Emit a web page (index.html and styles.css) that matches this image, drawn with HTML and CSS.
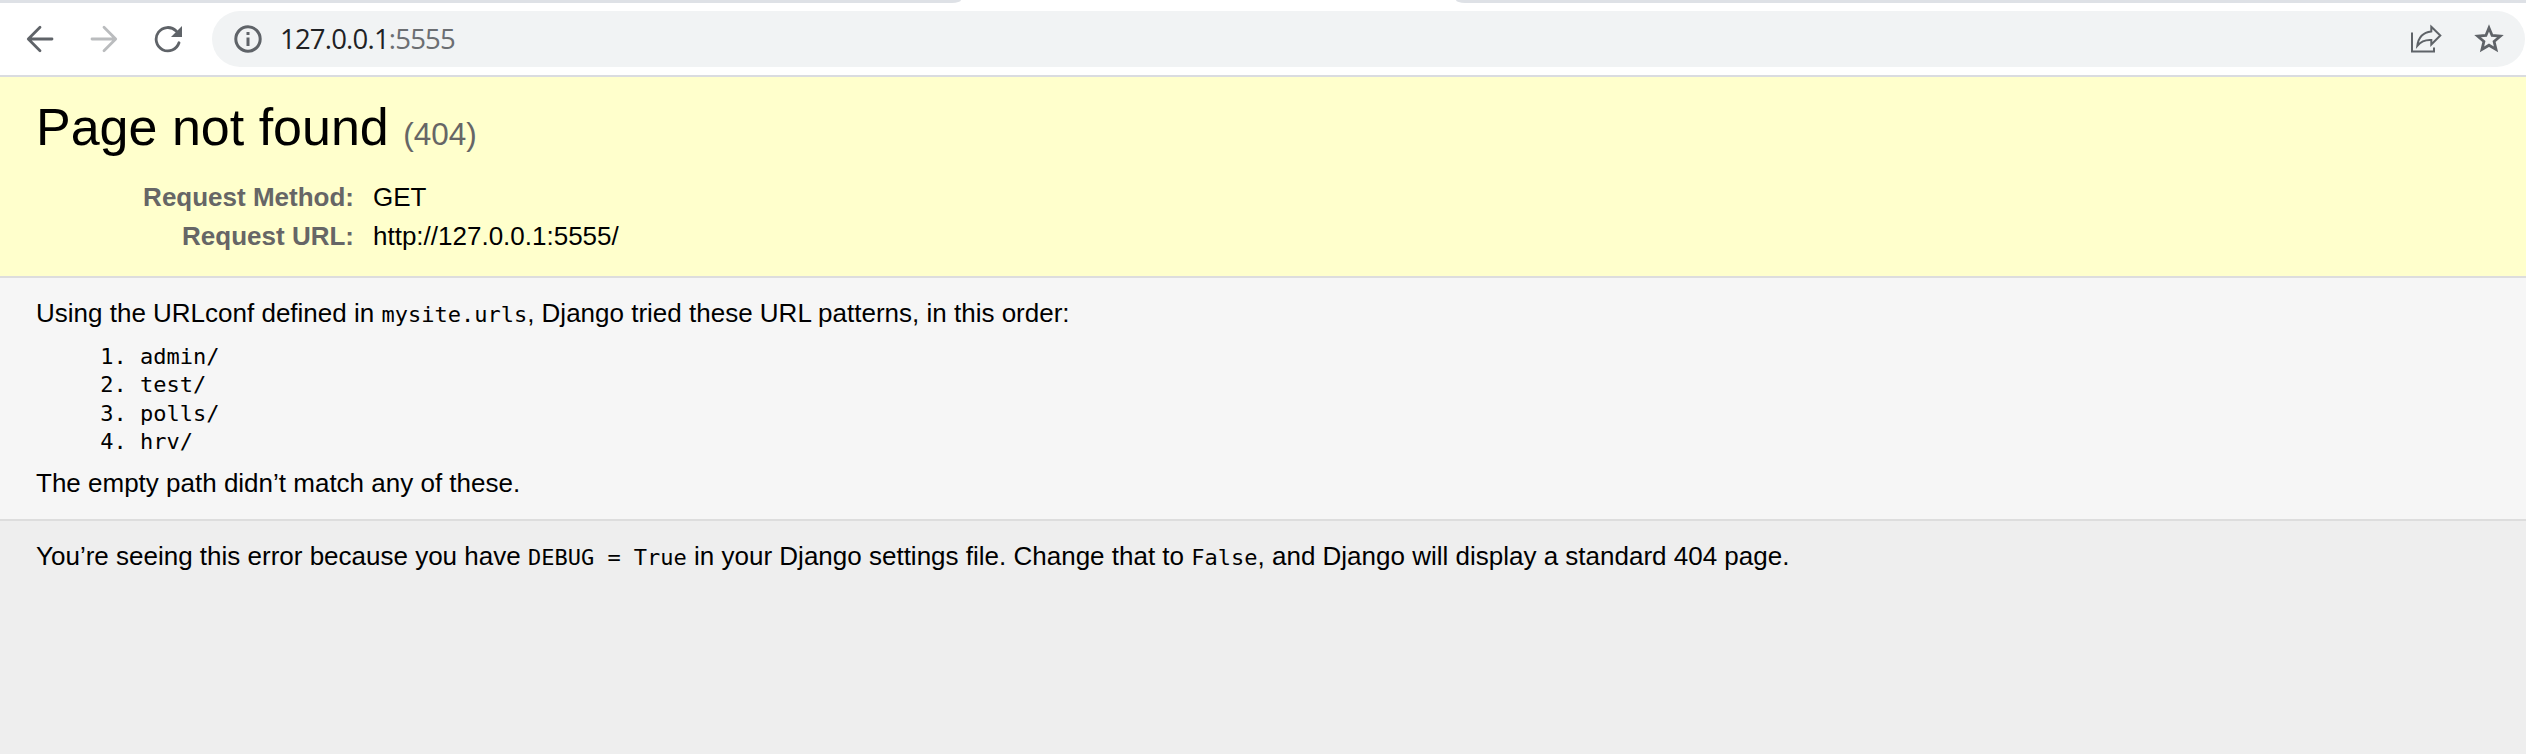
FILE: index.html
```html
<!DOCTYPE html>
<html lang="en">
<head>
<meta charset="utf-8">
<title>Page not found at /</title>
<link rel="stylesheet" href="styles.css">
</head>
<body>
<div class="browser">
  <div class="tabstrip"><div class="tabs-left"></div><div class="tabs-right"></div></div>
  <div class="toolbar">
    <svg class="nav back" viewBox="0 0 28 28"><path d="M26 14H3M14 2.3 2.3 14 14 25.7"/></svg>
    <svg class="nav forward" viewBox="0 0 28 28"><path d="M2 14H25M14 2.3 25.7 14 14 25.7"/></svg>
    <svg class="nav reload" viewBox="0 0 28 28"><path d="M25 17.8A11.7 11.7 0 1 1 22.2 6"/><path class="solid" d="M28 1V12H17Z"/></svg>
    <div class="omnibox">
      <svg class="info-icon" viewBox="0 0 28 28"><circle cx="14" cy="14" r="12.2"/><path d="M14 12.5V21M14 7V10"/></svg>
      <div class="address">127.0.0.1<span>:5555</span></div>
      <svg class="share" viewBox="0 0 32 30"><path d="M2 8.5V27.5H24V23.5"/><path class="arrow" d="M21.3 2.8 30.3 11.5 21.3 20.5V16C15.5 15.6 11 17.4 7.3 21.8C8.3 13.5 13 8.4 21.3 7.4Z"/></svg>
      <svg class="star" viewBox="0 0 30 30"><path d="M15 4 18.1 11.5 26.3 12.2 20.1 17.5 22 25.4 15 21.2 8 25.4 9.9 17.5 3.7 12.2 11.9 11.5Z"/></svg>
    </div>
  </div>
</div>
<header class="summary">
  <h1>Page not found <small>(404)</small></h1>
  <dl class="meta">
    <dt>Request Method:</dt><dd>GET</dd>
    <dt>Request URL:</dt><dd>http://127.0.0.1:5555/</dd>
  </dl>
</header>
<main class="info">
  <p>Using the URLconf defined in <code>mysite.urls</code>, Django tried these URL patterns, in this order:</p>
  <ol class="patterns">
    <li>admin/</li>
    <li>test/</li>
    <li>polls/</li>
    <li>hrv/</li>
  </ol>
  <p>The empty path didn’t match any of these.</p>
</main>
<footer class="explanation">
  <p>You’re seeing this error because you have <code>DEBUG = True</code> in your Django settings file. Change that to <code>False</code>, and Django will display a standard 404 page.</p>
</footer>
</body>
</html>
```
FILE: styles.css
```css
* { box-sizing: border-box; margin: 0; padding: 0; }
body {
  min-height: 754px;
  overflow: hidden;
  background: #eee;
  color: #000;
  font-family: "Liberation Sans", Arial, sans-serif;
  font-size: 26px;
}
.browser { height: 77px; background: #fff; border-bottom: 2px solid #dadce0; }
.tabstrip { display: flex; justify-content: space-between; height: 3px; }
.tabs-left, .tabs-right { height: 3px; background: #dee1e6; }
.tabs-left { width: 961px; border-bottom-right-radius: 9px 3px; }
.tabs-right { width: 1070px; border-bottom-left-radius: 9px 3px; }
.toolbar { display: flex; align-items: center; height: 72px; padding-left: 26px; }
.nav { width: 28px; height: 28px; fill: none; stroke: #5f6368; stroke-width: 2.8; margin-right: 36px; stroke-linecap: round; stroke-linejoin: round; }
.nav .solid { fill: #5f6368; stroke: none; }
.nav.forward { stroke: #babcbe; }
.nav.reload { margin-right: 30px; }
.omnibox {
  display: flex;
  align-items: center;
  flex: 1;
  height: 56px;
  margin-right: 1px;
  padding: 0 21px 0 22px;
  border-radius: 28px;
  background: #f1f3f4;
}
.info-icon { width: 28px; height: 28px; fill: none; stroke: #5f6368; stroke-width: 3; }
.address {
  flex: 1;
  margin-left: 18px;
  font: 27.5px/36px "Open Sans", "Noto Sans", sans-serif;
  letter-spacing: -0.8px;
  color: #202124;
}
.address span { color: #6b6e72; }
.share { width: 32px; height: 30px; margin-right: 32px; fill: none; stroke: #5f6368; stroke-width: 2; }
.star { width: 30px; height: 30px; fill: none; stroke: #5f6368; stroke-width: 2.8; }
.summary { height: 201px; padding: 20px 36px 0; background: #ffc; border-bottom: 2px solid #ddd; }
h1 { height: 60px; font-size: 52px; line-height: 60px; font-weight: 400; }
h1 small { font-size: 31.5px; line-height: 1; color: #666; }
.meta { display: grid; grid-template-columns: 318px 1fr; column-gap: 19px; margin-top: 21px; line-height: 39px; }
dt { text-align: right; font-weight: 700; color: #666; }
.info { height: 243px; padding: 15px 36px 0; background: #f6f6f6; border-bottom: 2px solid #ddd; }
p { line-height: 40px; }
code, .patterns { font-family: "DejaVu Sans Mono", monospace; font-size: 22px; }
code { line-height: 1; }
.patterns { margin: 10px 0 7px; padding-left: 104px; line-height: 28.3px; }
.explanation { padding: 15px 36px 0; }
```
